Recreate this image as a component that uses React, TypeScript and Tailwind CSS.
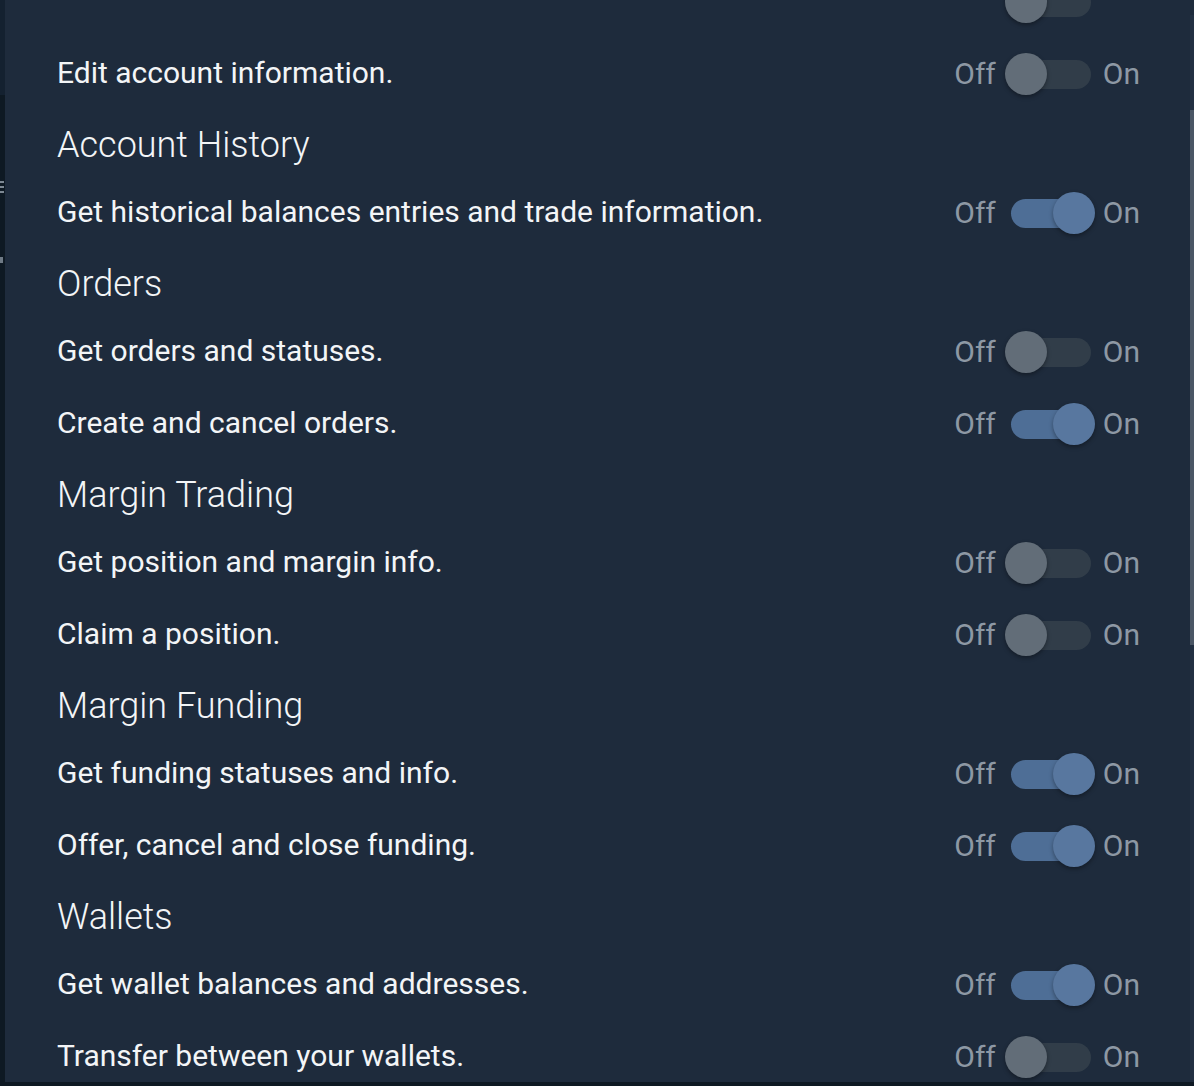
import React from "react";

type Item =
  | { kind: "heading"; label: string }
  | { kind: "row"; label: string; on: boolean; hidden?: boolean };

const items: Item[] = [
  { kind: "row", label: "", on: false, hidden: true },
  { kind: "row", label: "Edit account information.", on: false },
  { kind: "heading", label: "Account History" },
  { kind: "row", label: "Get historical balances entries and trade information.", on: true },
  { kind: "heading", label: "Orders" },
  { kind: "row", label: "Get orders and statuses.", on: false },
  { kind: "row", label: "Create and cancel orders.", on: true },
  { kind: "heading", label: "Margin Trading" },
  { kind: "row", label: "Get position and margin info.", on: false },
  { kind: "row", label: "Claim a position.", on: false },
  { kind: "heading", label: "Margin Funding" },
  { kind: "row", label: "Get funding statuses and info.", on: true },
  { kind: "row", label: "Offer, cancel and close funding.", on: true },
  { kind: "heading", label: "Wallets" },
  { kind: "row", label: "Get wallet balances and addresses.", on: true },
  { kind: "row", label: "Transfer between your wallets.", on: false },
];

function Toggle({ on, hideLabels }: { on: boolean; hideLabels?: boolean }) {
  return (
    <div className="flex items-center text-[30px] text-[#8d98a4]">
      <span className={`pb-[2px] ${hideLabels ? "invisible" : ""}`}>Off</span>
      <div
        className={`relative ml-[15px] h-[29px] w-[80px] rounded-full ${
          on ? "bg-[#4e6e96]" : "bg-[#313d49]"
        }`}
      >
        <div
          className={`absolute top-1/2 h-[42px] w-[42px] -translate-y-1/2 rounded-full shadow-[0_2px_4px_rgba(0,0,0,0.35)] ${
            on ? "left-[42px] bg-[#58779f]" : "left-[-6px] bg-[#626d78]"
          }`}
        />
      </div>
      <span className={`ml-[12px] pb-[2px] ${hideLabels ? "invisible" : ""}`}>On</span>
    </div>
  );
}

export default function App() {
  return (
    <div
      className="flex h-[1086px] w-[1194px] overflow-hidden bg-[#0e1923]"
      style={{ fontFamily: "Roboto, 'Liberation Sans', sans-serif" }}
    >
      {/* backdrop sliver */}
      <div className="w-[5px] shrink-0 overflow-hidden">
        <div className="h-[95px] bg-[#142130]" />
        <div className="mt-[86px] flex w-[4px] flex-col gap-[3px]">
          <div className="h-[2px] bg-[#7d8893]" />
          <div className="h-[2px] bg-[#7d8893]" />
          <div className="h-[2px] bg-[#7d8893]" />
        </div>
        <div className="mt-[64px] h-[6px] w-[3px] bg-[#6f7a85]" />
      </div>

      <div className="flex h-[1082px] flex-1 overflow-hidden bg-[#1e2b3c]">
        <div className="-mt-[34px] flex-1 pl-[52px] pr-[50px] text-[#f3f5f7]">
          {items.map((it, i) =>
            it.kind === "heading" ? (
              <div key={i} className="flex h-[67px] items-center pt-[3px] text-[36px] font-light">
                {it.label}
              </div>
            ) : (
              <div key={i} className="flex h-[72px] items-center justify-between">
                <span className="pb-[3px] text-[30px]">{it.label}</span>
                <Toggle on={it.on} hideLabels={it.hidden} />
              </div>
            )
          )}
        </div>

        {/* scrollbar */}
        <div className="flex w-[4px] shrink-0 flex-col pt-[15px] pb-[2px]">
          <div className="h-[95px] bg-[#223042]" />
          <div className="h-[535px] bg-[#4a5665]" />
          <div className="flex-1 bg-[#223042]" />
        </div>
      </div>
    </div>
  );
}
